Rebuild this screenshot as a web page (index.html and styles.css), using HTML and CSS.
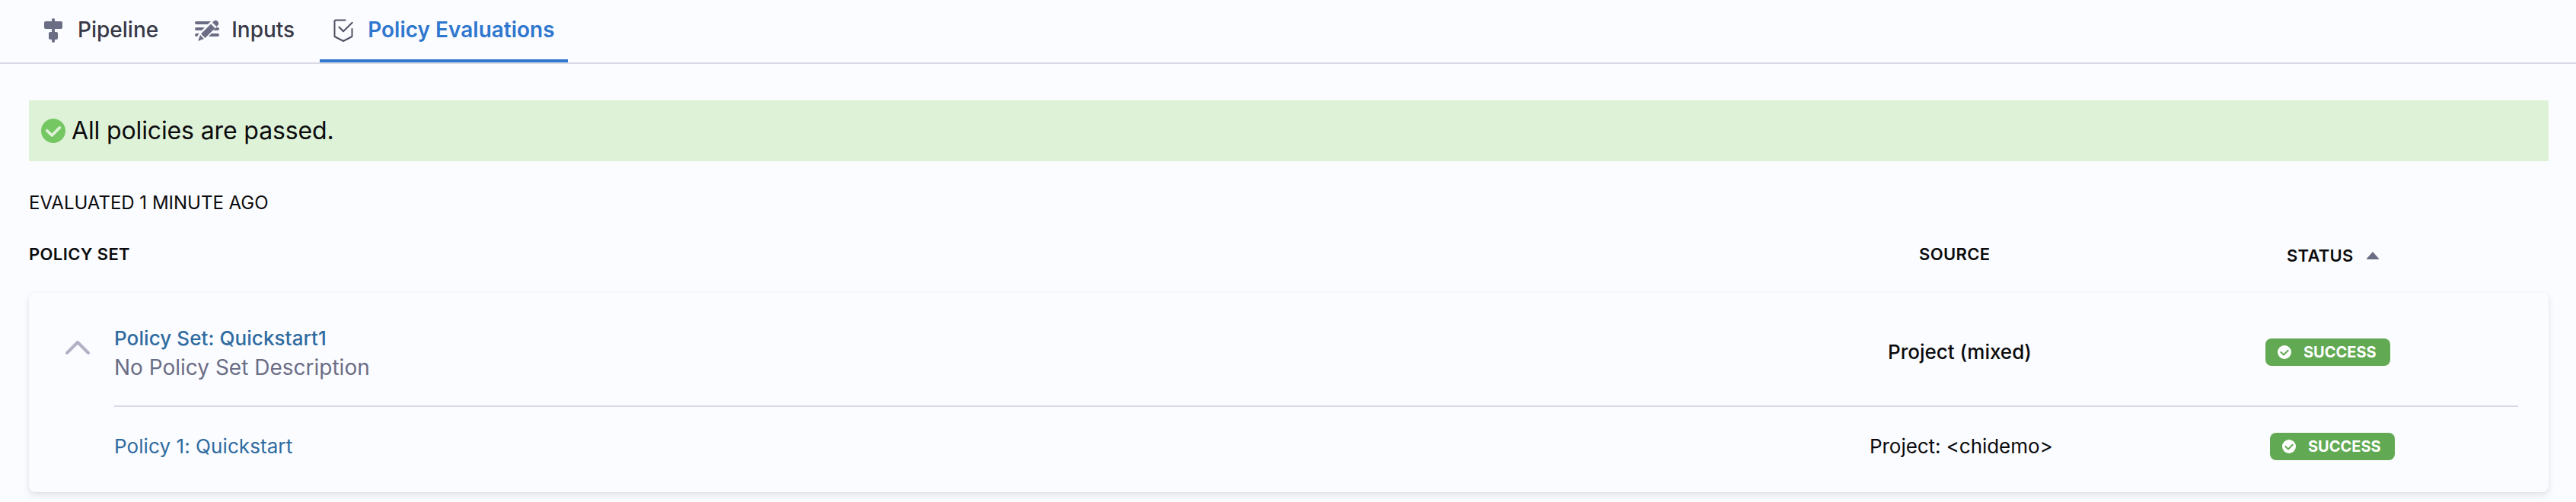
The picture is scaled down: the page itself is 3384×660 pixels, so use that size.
FILE: index.html
```html
<!DOCTYPE html>
<html lang="en">
<head>
<meta charset="utf-8">
<title>Policy Evaluations</title>
<link rel="stylesheet" href="styles.css">
</head>
<body>
<nav class="tabs">
  <a class="tab tab-pipeline">
    <svg class="tab-icon" viewBox="0 0 32 32" fill="#6b6d85"><rect x="14" y="0" width="4" height="32" rx="2"/><rect x="4" y="4" width="24" height="10" rx="2"/><rect x="10" y="18" width="12" height="10" rx="2"/></svg>
    <span>Pipeline</span>
  </a>
  <a class="tab tab-inputs">
    <svg class="tab-icon" viewBox="0 0 32 32" fill="#6b6d85"><path d="M2 4h19l-4 4H2a2 2 0 0 1 0-4zM2 12h11l-4 4H2a2 2 0 0 1 0-4zM2 20h3.500l-2.500 4H2a2 2 0 0 1 0-4zM28 12h2a2 2 0 0 1 0 4h-6zM22 20h8a2 2 0 0 1 0 4H18zM4 30l3-8 5 5zM8 20.500L21 7.500l5.500 5.500-13 13zM23 5.500l2-2a4 4 0 0 1 5.500 5.500l-2 2z"/></svg>
    <span>Inputs</span>
  </a>
  <a class="tab tab-active">
    <svg class="tab-icon" viewBox="0 0 32 32" fill="none" stroke="#4f5162" stroke-width="2" stroke-linecap="round" stroke-linejoin="round"><path d="M17.500 2.500H5a1.500 1.500 0 0 0-1.500 1.500v20L15 30l11.500-6V14M9.500 11.500l5.500 5.700L26.700 5.800"/></svg>
    <span>Policy Evaluations</span>
  </a>
</nav>
<main class="content">
  <div class="banner">
    <svg class="banner-icon" viewBox="0 0 32 32"><circle cx="16" cy="16" r="16" fill="#74c763"/><path d="M7.700 15.700l6.500 6.300L24.300 11.900" fill="none" stroke="#def2d8" stroke-width="3.800" stroke-linecap="round" stroke-linejoin="round"/></svg>
    <span>All policies are passed.</span>
  </div>
  <p class="evaluated">EVALUATED 1 MINUTE AGO</p>
  <div class="head">
    <span>POLICY SET</span>
    <span>SOURCE</span>
    <span class="head-status">STATUS<svg class="sort" viewBox="0 0 16 10"><path d="M8 0l8 9v1H0V9z" fill="#6b6d85"/></svg></span>
  </div>
  <section class="card">
    <svg class="chevron" viewBox="0 0 32 18"><path d="M2 16L16 2l14 14" fill="none" stroke="#b0b1c4" stroke-width="4" stroke-linecap="round" stroke-linejoin="round"/></svg>
    <div class="rows">
      <div class="row row-set">
        <div class="name"><a class="set-link">Policy Set: Quickstart1</a><span class="description">No Policy Set Description</span></div>
        <div class="source">Project (mixed)</div>
        <div class="badge"><svg class="badge-icon" viewBox="0 0 18 18"><circle cx="9" cy="9" r="9" fill="#fff"/><path d="M4.300 9l3.700 3.500 5.700-5.700" fill="none" stroke="#62a953" stroke-width="2" stroke-linecap="round" stroke-linejoin="round"/></svg>SUCCESS</div>
      </div>
      <div class="row row-policy">
        <div class="name"><a class="policy-link">Policy 1: Quickstart</a></div>
        <div class="source">Project: &lt;chidemo&gt;</div>
        <div class="badge"><svg class="badge-icon" viewBox="0 0 18 18"><circle cx="9" cy="9" r="9" fill="#fff"/><path d="M4.300 9l3.700 3.500 5.700-5.700" fill="none" stroke="#62a953" stroke-width="2" stroke-linecap="round" stroke-linejoin="round"/></svg>SUCCESS</div>
      </div>
    </div>
  </section>
</main>
</body>
</html>
```
FILE: styles.css
```css
* { box-sizing: border-box; }

body {
  margin: 0;
  height: 660px;
  overflow: hidden;
  background: #fbfcff;
  color: #0b0b0d;
  font-family: Inter, "Open Sans", sans-serif;
  font-size: 26px;
  line-height: 32px;
}

svg { display: block; flex: none; }

.tabs {
  display: flex;
  height: 84px;
  padding-left: 34px;
  border-bottom: 2px solid #d9dae5;
}

.tab {
  display: flex;
  align-items: center;
  height: 82px;
  padding: 0 20px 4px;
  font-size: 28px;
  font-weight: 500;
  color: #383946;
}

.tab-icon { width: 32px; height: 32px; margin: 2px 16px 0 0; }

.tab-inputs { margin-left: 8px; }

.tab-active {
  margin-left: 13px;
  padding: 0 17px 0 16px;
  border-bottom: 4px solid #2f77ce;
  border-radius: 4px 4px 0 0;
  font-weight: 600;
  color: #2f77ce;
}

.tab-active .tab-icon { margin-right: 15px; }

.content { padding: 48px 36px 0 38px; }

.banner {
  display: flex;
  align-items: center;
  gap: 8px;
  height: 80px;
  padding-left: 16px;
  background: #def2d8;
  font-size: 32px;
  letter-spacing: -.13px;
}

.banner-icon { width: 32px; height: 32px; }

.evaluated { margin: 39px 0 0; font-size: 24px; }

.head {
  display: grid;
  grid-template-columns: 2483px 483px 1fr;
  height: 32px;
  margin-top: 35px;
  font-size: 22px;
  font-weight: 600;
  letter-spacing: .38px;
}

.head-status {
  display: flex;
  align-items: center;
  gap: 17px;
  height: 32px;
  padding-top: 4px;
  letter-spacing: .25px;
}

.sort { width: 16px; height: 10px; }

.card {
  display: flex;
  height: 262px;
  margin-top: 35px;
  padding: 0 40px 0 48px;
  border-radius: 8px;
  background: #fbfcff;
  box-shadow: 0 0 2px rgba(40, 41, 61, .06), 0 4px 8px rgba(96, 97, 112, .16);
}

.chevron { width: 32px; height: 18px; margin: 63px 32px 0 0; }

.rows { flex: 1; }

.row { display: grid; align-items: center; }

.row-set {
  grid-template-columns: 2330px 496px 1fr;
  height: 150px;
  padding-top: 8px;
  border-bottom: 2px solid #d9dae5;
  font-weight: 500;
}

.row-policy {
  grid-template-columns: 2306px 526px 1fr;
  height: 104px;
}

.row-policy .source { letter-spacing: -.05px; }

.name { display: flex; flex-direction: column; }
.row-set .name { padding-top: 8px; }
.set-link, .policy-link { color: #2f6ba0; letter-spacing: .08px; }
.description { font-size: 28px; font-weight: 400; line-height: 44px; color: #6b6d85; }

.badge {
  display: flex;
  align-items: center;
  gap: 16px;
  width: 164px;
  height: 36px;
  padding-left: 16px;
  border-radius: 8px;
  background: #62a953;
  color: #fff;
  font-size: 20px;
  font-weight: 700;
}

.badge-icon { width: 18px; height: 18px; }
```
